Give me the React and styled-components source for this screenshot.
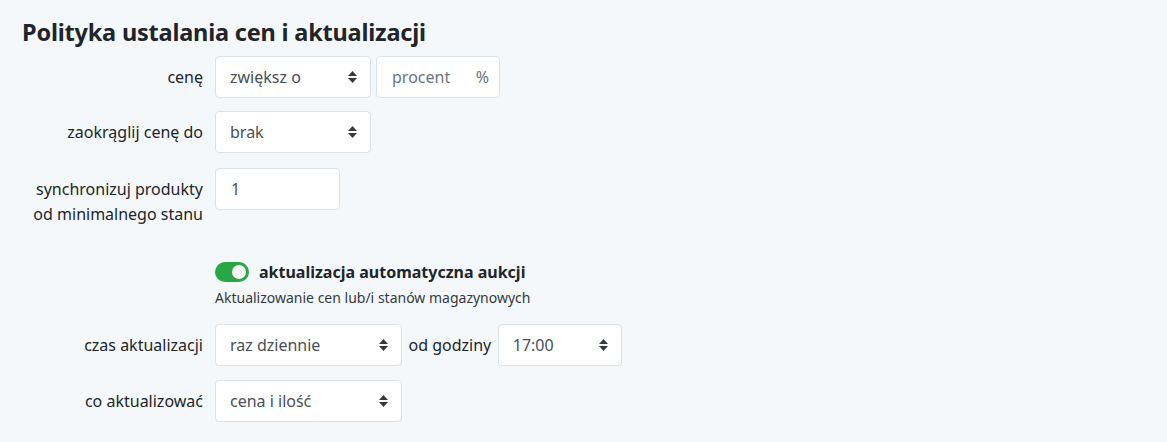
import React from 'react';
import styled, {createGlobalStyle} from 'styled-components';

const GlobalStyle = createGlobalStyle`
  html, body {
    margin: 0;
    padding: 0;
    background: #f5f8fb;
    font-family: "Noto Sans", "Open Sans", sans-serif;
    color: #212529;
  }
`;

const Arrows = () => (
	<svg width="9" height="12" viewBox="0 0 9 12">
		<path d="M4.5 0 L9 5 H0 Z" fill="#343a40"/>
		<path d="M4.5 12 L9 7 H0 Z" fill="#343a40"/>
	</svg>
);

const App = () => {
	return (
		<Page>
			<GlobalStyle/>
			<Title>Polityka ustalania cen i aktualizacji</Title>

			<Row top={6}>
				<Label>cenę</Label>
				<Controls>
					<Select width={156}><span>zwiększ o</span><Arrows/></Select>
					<Input width={124}><Placeholder>procent</Placeholder><Suffix>%</Suffix></Input>
				</Controls>
			</Row>

			<Row top={13}>
				<Label>zaokrąglij cenę do</Label>
				<Controls>
					<Select width={156}><span>brak</span><Arrows/></Select>
				</Controls>
			</Row>

			<Row top={15} align="flex-start">
				<Label multi>synchronizuj produkty<br/>od minimalnego stanu</Label>
				<Controls>
					<Input width={125}><span>1</span></Input>
				</Controls>
			</Row>

			<SwitchBlock>
				<SwitchRow>
					<Toggle><Knob/></Toggle>
					<SwitchLabel>aktualizacja automatyczna aukcji</SwitchLabel>
				</SwitchRow>
				<Hint>Aktualizowanie cen lub/i stanów magazynowych</Hint>
			</SwitchBlock>

			<Row top={17}>
				<Label>czas aktualizacji</Label>
				<Controls>
					<Select width={187}><span>raz dziennie</span><Arrows/></Select>
					<Inline>od godziny</Inline>
					<Select width={124}><span>17:00</span><Arrows/></Select>
				</Controls>
			</Row>

			<Row top={14}>
				<Label>co aktualizować</Label>
				<Controls>
					<Select width={187}><span>cena i ilość</span><Arrows/></Select>
				</Controls>
			</Row>
		</Page>
	);
};

export default App;

const Page = styled.div`
  width: 1167px;
  height: 442px;
  box-sizing: border-box;
  padding: 14px 22px 0;
  overflow: hidden;
`;

const Title = styled.h2`
  margin: 0;
  font-size: 23.5px;
  line-height: 36px;
  font-weight: 700;
  color: #212529;
  letter-spacing: -0.2px;
`;

const Row = styled.div`
  display: flex;
  align-items: ${({align}) => align || 'center'};
  gap: 12px;
  margin-top: ${({top}) => top}px;
`;

const Label = styled.div`
  width: 181px;
  flex-shrink: 0;
  text-align: right;
  font-size: 16px;
  line-height: 25px;
  color: #212529;
  white-space: nowrap;
  padding-top: ${({multi}) => (multi ? '9px' : '0')};
`;

const Controls = styled.div`
  display: flex;
  align-items: center;
  gap: 5px;
`;

const Field = styled.div`
  width: ${({width}) => width}px;
  height: 42px;
  box-sizing: border-box;
  background: #fff;
  border: 1px solid #dde2e6;
  border-radius: 4px;
  display: flex;
  align-items: center;
  font-size: 16px;
  color: #495057;
`;

const Select = styled(Field)`
  justify-content: space-between;
  padding: 0 13px 0 14px;
`;

const Input = styled(Field)`
  justify-content: space-between;
  padding: 0 10px 0 15px;
`;

const Placeholder = styled.span`
  color: #6c757d;
`;

const Suffix = styled.span`
  color: #6c757d;
`;

const Inline = styled.span`
  font-size: 16px;
  color: #212529;
  padding: 0 1.5px;
`;

const SwitchBlock = styled.div`
  margin: 34px 0 0 193px;
`;

const SwitchRow = styled.div`
  display: flex;
  align-items: center;
  gap: 10px;
`;

const Toggle = styled.div`
  width: 34px;
  height: 20px;
  border-radius: 10px;
  background: #28a745;
  box-sizing: border-box;
  display: flex;
  align-items: center;
  justify-content: flex-end;
  padding: 0 3px;
`;

const Knob = styled.div`
  width: 14px;
  height: 14px;
  border-radius: 50%;
  background: #fff;
`;

const SwitchLabel = styled.span`
  font-size: 16px;
  font-weight: 700;
  color: #212529;
`;

const Hint = styled.div`
  margin-top: 5px;
  font-size: 14px;
  color: #343a40;
`;
